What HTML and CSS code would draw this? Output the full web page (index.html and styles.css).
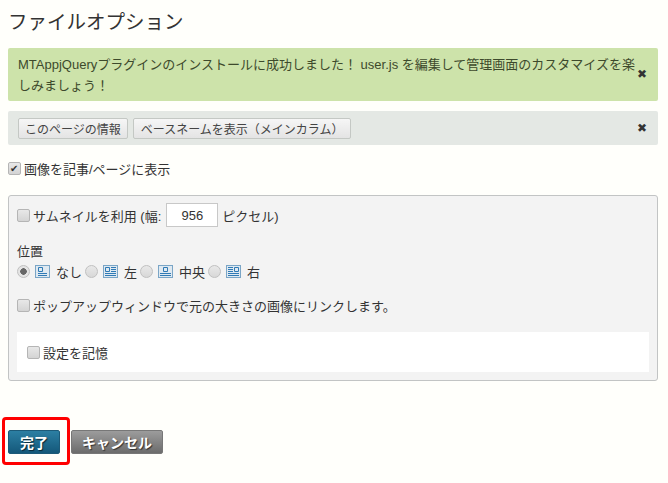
FILE: index.html
```html
<!DOCTYPE html>
<html lang="ja">
<head>
<meta charset="UTF-8" />
<title>ファイルオプション</title>
<link rel="stylesheet" href="styles.css">
</head>
<body>

<h1 class="page-title">ファイルオプション</h1>

<div class="msg msg-success">
  MTAppjQueryプラグインのインストールに成功しました！ user.js を編集して管理画面のカスタマイズを楽しみましょう！
  <span class="msg-close">✖</span>
</div>

<div class="msg msg-tools">
  <button type="button" class="tool-btn">このページの情報</button>
  <button type="button" class="tool-btn">ベースネームを表示（メインカラム）</button>
  <span class="msg-close">✖</span>
</div>

<label class="field show-line"><input type="checkbox" class="check" checked> 画像を記事/ページに表示</label>

<div class="options">
  <div class="thumb-row">
    <label class="field"><input type="checkbox" class="check"> サムネイルを利用 (幅:</label>
    <input type="text" class="width-input" value="956">
    <span>ピクセル)</span>
  </div>

  <div class="pos-label">位置</div>
  <div class="pos-row">
    <input type="radio" class="radio" name="align" checked>
    <svg class="align-icon" viewBox="0 0 15 13"><rect x=".5" y=".5" width="14" height="12" fill="#dfe9f1" stroke="#7aa5c6"/><path d="M3.5 2.5h4v4h-4zM3 8.5h9M3 10.5h9" stroke="#2f7ab5" fill="none"/></svg>
    <span class="pos-name">なし</span>
    <input type="radio" class="radio" name="align">
    <svg class="align-icon" viewBox="0 0 15 13"><rect x=".5" y=".5" width="14" height="12" fill="#dfe9f1" stroke="#7aa5c6"/><path d="M2.5 2.5h4v4h-4zM8 2.5h5M8 4.5h5M8 6.5h5M2 8.5h11M2 10.5h11" stroke="#2f7ab5" fill="none"/></svg>
    <span class="pos-name">左</span>
    <input type="radio" class="radio" name="align">
    <svg class="align-icon" viewBox="0 0 15 13"><rect x=".5" y=".5" width="14" height="12" fill="#dfe9f1" stroke="#7aa5c6"/><path d="M5.5 2.5h4v4h-4zM2 8.5h11M2 10.5h11" stroke="#2f7ab5" fill="none"/></svg>
    <span class="pos-name">中央</span>
    <input type="radio" class="radio" name="align">
    <svg class="align-icon" viewBox="0 0 15 13"><rect x=".5" y=".5" width="14" height="12" fill="#dfe9f1" stroke="#7aa5c6"/><path d="M8.5 2.5h4v4h-4zM2 2.5h5M2 4.5h5M2 6.5h5M2 8.5h11M2 10.5h11" stroke="#2f7ab5" fill="none"/></svg>
    <span class="pos-name">右</span>
  </div>

  <label class="field popup-row"><input type="checkbox" class="check"> ポップアップウィンドウで元の大きさの画像にリンクします。</label>

  <div class="remember">
    <label class="field"><input type="checkbox" class="check"> 設定を記憶</label>
  </div>
</div>

<div class="actions">
  <button type="button" class="btn btn-primary">完了</button>
  <button type="button" class="btn btn-cancel">キャンセル</button>
  <div class="highlight"></div>
</div>

</body>
</html>
```

FILE: styles.css
```css
body{
  margin:0;padding:0 10px 0 8px;
  background:#fffffb;color:#333;
  font-family:"Liberation Sans","Noto Sans CJK JP",sans-serif;
  font-size:13px;
}
.page-title{
  margin:0;padding-top:9px;height:48px;box-sizing:border-box;
  font-size:19.5px;font-weight:400;line-height:26px;color:#333;
}

/* messages */
.msg{
  position:relative;border-radius:2px;box-sizing:border-box;
}
.msg-success{
  height:53px;padding:6px 18px 0 10px;
  background:#cde3aa;color:#3d4a2c;line-height:21px;
}
.msg-tools{
  display:flex;align-items:center;gap:5px;
  height:34px;margin-top:10px;padding:0 10px;
  background:#e4e8e4;
}
.msg-close{
  position:absolute;right:11px;top:50%;transform:translateY(-50%);
  font:12px/13px "DejaVu Sans",sans-serif;color:#333;
}
.msg-success .msg-close{top:20px;transform:none;}
.tool-btn{
  height:21px;padding:0 6px;
  border:1px solid #c4c8c4;border-radius:2px;
  background:linear-gradient(to bottom,#f6f6f6,#e4e4e4);
  font-family:inherit;font-size:12px;color:#444;
}
.tool-btn + .tool-btn{padding:0 7px;}

/* fields */
.field{display:inline-flex;align-items:center;gap:3px;white-space:nowrap;}
.show-line{margin-top:13px;height:20px;display:flex;}
.check{
  appearance:none;position:relative;box-sizing:border-box;
  width:13px;height:13px;margin:0;
  border:1px solid #b5b5b5;border-radius:2px;
  background:linear-gradient(to bottom,#e8e8e8,#d4d4d4);
}
.check:checked::after{
  content:"✔";position:absolute;left:1px;top:-1px;
  font:10px/13px "DejaVu Sans",sans-serif;color:#333;
}
.radio{
  appearance:none;box-sizing:border-box;
  width:13px;height:13px;margin:0;
  border:1px solid #c0c0c0;border-radius:50%;
  background:linear-gradient(to bottom,#e8e8e8,#d8d8d8);
}
.radio:checked{background:radial-gradient(circle,#666 0 3px,#e4e4e4 3.5px);}

/* option panel */
.options{
  margin-top:17px;height:186px;box-sizing:border-box;padding:7px 8px 0;
  background:#f3f3f3;
  border:1px solid #c2c4c4;border-radius:3px;
}
.thumb-row{display:flex;align-items:center;gap:4px;height:24px;}
.width-input{
  width:52px;height:24px;box-sizing:border-box;margin-left:1px;padding:0;
  border:1px solid #c8c8c8;background:#fff;
  text-align:center;font:inherit;color:#333;
}
.pos-label{margin-top:16px;line-height:18px;}
.pos-row{display:flex;align-items:center;height:20px;}
.align-icon{width:15px;height:13px;margin:0 6px 0 5px;}
.pos-name{margin-right:3px;}
.popup-row{display:flex;margin-top:14px;height:20px;}
.remember{
  margin-top:17px;height:40px;padding:0 10px;
  display:flex;align-items:center;
  background:#fff;
}

/* bottom buttons */
.actions{
  position:relative;display:flex;gap:11px;
  margin-top:49px;padding-bottom:28px;
}
.btn{
  height:24px;border:1px solid #777;border-radius:2px;
  font:700 14px "Liberation Sans","Noto Sans CJK JP",sans-serif;color:#fff;
  text-shadow:1px 1px 1px rgba(0,0,0,.6);
}
.btn-primary{
  width:52px;border-color:#1d5a78;
  background:linear-gradient(to bottom,#2c7fa3,#14587a);
}
.btn-cancel{
  width:92px;
  background:linear-gradient(to bottom,#9c9c9c,#6c6c6c);
}
.highlight{
  position:absolute;left:-6px;top:-13px;
  width:68px;height:48px;box-sizing:border-box;
  border:3px solid #f00;border-radius:4px;
}
```
